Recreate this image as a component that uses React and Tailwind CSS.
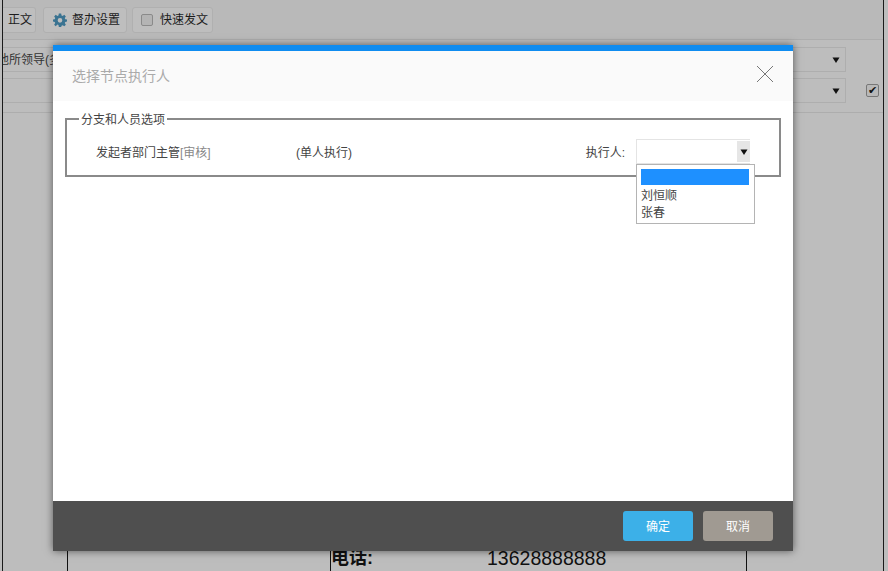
import { useState } from 'react';

const cjk = 'font-["Liberation_Sans","Noto_Sans_CJK_SC",sans-serif]';

const Caret = () => (
  <svg width="8" height="8" viewBox="0 0 8 8" className="shrink-0">
    <path d="M0.5 1.5h7L4 7z" fill="#111" />
  </svg>
);

const Gear = () => (
  <svg width="14" height="14" viewBox="0 0 24 24" className="shrink-0">
    <path
      fillRule="evenodd"
      fill="#3a7391"
      d="M10 1h4l.6 3.2 2 .8L19.300 3.200 22 6l-1.800 2.700.8 2L24 11.300v3.400l-3 .6-.8 2L22 20l-2.700 2.700-2.700-1.800-2 .8L14 24h-4l-.6-3.300-2-.8L4.700 22.700 2 20l1.800-2.700-.8-2L0 14.700v-3.400l3-.6.8-2L2 6l2.700-2.800L7.400 5l2-.8zM12 8.500a4 4 0 1 0 0 8 4 4 0 0 0 0-8z"
    />
  </svg>
);

const ToolButton = ({ children, className = '' }) => (
  <div className={`flex h-[26px] items-center gap-[5px] rounded-[3px] border border-[#b0b0b0] bg-[#bebebe] text-[12px] text-[#1c1c1c] ${className}`}>
    {children}
  </div>
);

const SelectRow = ({ label, check }) => (
  <div className="flex h-[25px] items-center">
    <div className="flex h-full w-[843px] items-center justify-between overflow-hidden border-y border-r border-[#aeaeae] bg-[#bdbdbd] pr-[5px]">
      <span className="-ml-[6px] whitespace-nowrap text-[12px] text-[#333]">{label}</span>
      <Caret />
    </div>
    {check && (
      <div className="ml-[20px] flex h-[13px] w-[13px] items-center justify-center rounded-[2px] border border-[#777] bg-[#b8b8b8] text-[11px] leading-none text-[#111]">
        ✔
      </div>
    )}
  </div>
);

const App = () => {
  const [picked, setPicked] = useState('');

  return (
    <div className={`relative h-[571px] w-[888px] overflow-hidden bg-[#bdbdbd] ${cjk}`}>
      {/* page behind the dialog */}
      <div className="ml-[2px] flex h-full w-[882px] flex-col border-x border-[#1a1a1a]">
        <div className="flex h-[40px] items-center border-b border-[#adadad] bg-[#b9b9b9] pt-px">
          <ToolButton className="w-[33px] justify-center rounded-l-none border-l-0 pl-[2px]">正文</ToolButton>
          <ToolButton className="ml-[7px] w-[84px] pl-[9px]">
            <Gear />
            督办设置
          </ToolButton>
          <ToolButton className="ml-[5px] w-[81px] pl-[8px]">
            <span className="h-[12px] w-[12px] rounded-[2px] border border-[#8a8a8a] bg-[#b4b4b4]" />
            <span className="ml-[2px]">快速发文</span>
          </ToolButton>
        </div>
        <div className="flex flex-col gap-[6px] pt-[7px]">
          <SelectRow label="他所领导(多选)" />
          <SelectRow check />
        </div>
        <div className="mt-[9px] border-t border-[#adadad]" />
        <div className="mt-auto flex h-[20px] pl-[64px]">
          <div className="w-[263px] border-l border-[#111]" />
          <div className="flex w-[417px] items-start border-x border-[#111] leading-[14px]">
            <span className="w-[156px] text-[18px] font-bold text-[#111]">电话:</span>
            <span className="text-[19.500px] text-[#111]">13628888888</span>
          </div>
        </div>
      </div>

      {/* dialog */}
      <div className="absolute left-[53px] top-[45px] flex h-[506px] w-[740px] flex-col bg-white shadow-[0_0_8px_rgba(0,0,0,0.55)]">
        <div className="h-[6px] bg-[#0f8cf0]" />
        <div className="flex h-[50px] items-center justify-between bg-[#fafafa] pl-[19px] pr-[19px]">
          <span className="text-[14px] text-[#aaaaaa]">选择节点执行人</span>
          <svg width="18" height="18" viewBox="0 0 18 18" className="-mt-[4px]">
            <path d="M1 1l16 16M17 1L1 17" stroke="#777" strokeWidth="1" fill="none" />
          </svg>
        </div>
        <div className="flex-1 px-[12px] pt-[11px]">
          <fieldset className="relative h-[65px] border-2 border-[#8a8a8a] px-[29px]">
            <legend className="ml-[-17px] translate-y-px bg-white px-[2px] text-[12px] leading-[14px] text-[#444]">分支和人员选项</legend>
            <div className="flex items-center pt-[13px] text-[12px] text-[#444]">
              <span className="mt-[3px] w-[200px]">
                发起者部门主管<span className="text-[#888]">[审核]</span>
              </span>
              <span className="mt-[3px]">(单人执行)</span>
              <span className="ml-auto mt-[3px]">执行人:</span>
              <div className="relative ml-[11px] flex h-[25px] w-[114px] border border-r-0 border-[#e4e4e4]">
                <span className="flex-1" />
                <span className="my-px flex w-[13px] items-center justify-center bg-[#e6e6e6]">
                  <Caret />
                </span>
                {/* open dropdown */}
                <div className="absolute left-[-1px] top-[24px] z-10 h-[60px] w-[119px] border border-[#b4b4b4] bg-white pl-[4px] pr-[5px] pt-[4px] text-[12px] leading-[17px] text-[#444]">
                  <div
                    className={`mb-[3px] h-[16px] ${picked === '' ? 'bg-[#1e90ff]' : ''}`}
                    onClick={() => setPicked('')}
                  />
                  <div onClick={() => setPicked('刘恒顺')}>刘恒顺</div>
                  <div onClick={() => setPicked('张春')}>张春</div>
                </div>
              </div>
            </div>
          </fieldset>
        </div>
        <div className="flex h-[50px] items-center justify-end gap-[10px] bg-[#4f4f4f] pr-[20px]">
          <button type="button" className="h-[30px] w-[70px] rounded-[3px] bg-[#3cb0e8] pt-px text-[12px] text-white">确定</button>
          <button type="button" className="h-[30px] w-[70px] rounded-[3px] bg-[#a09a92] pt-px text-[12px] text-white">取消</button>
        </div>
      </div>
    </div>
  );
};

export default App;
